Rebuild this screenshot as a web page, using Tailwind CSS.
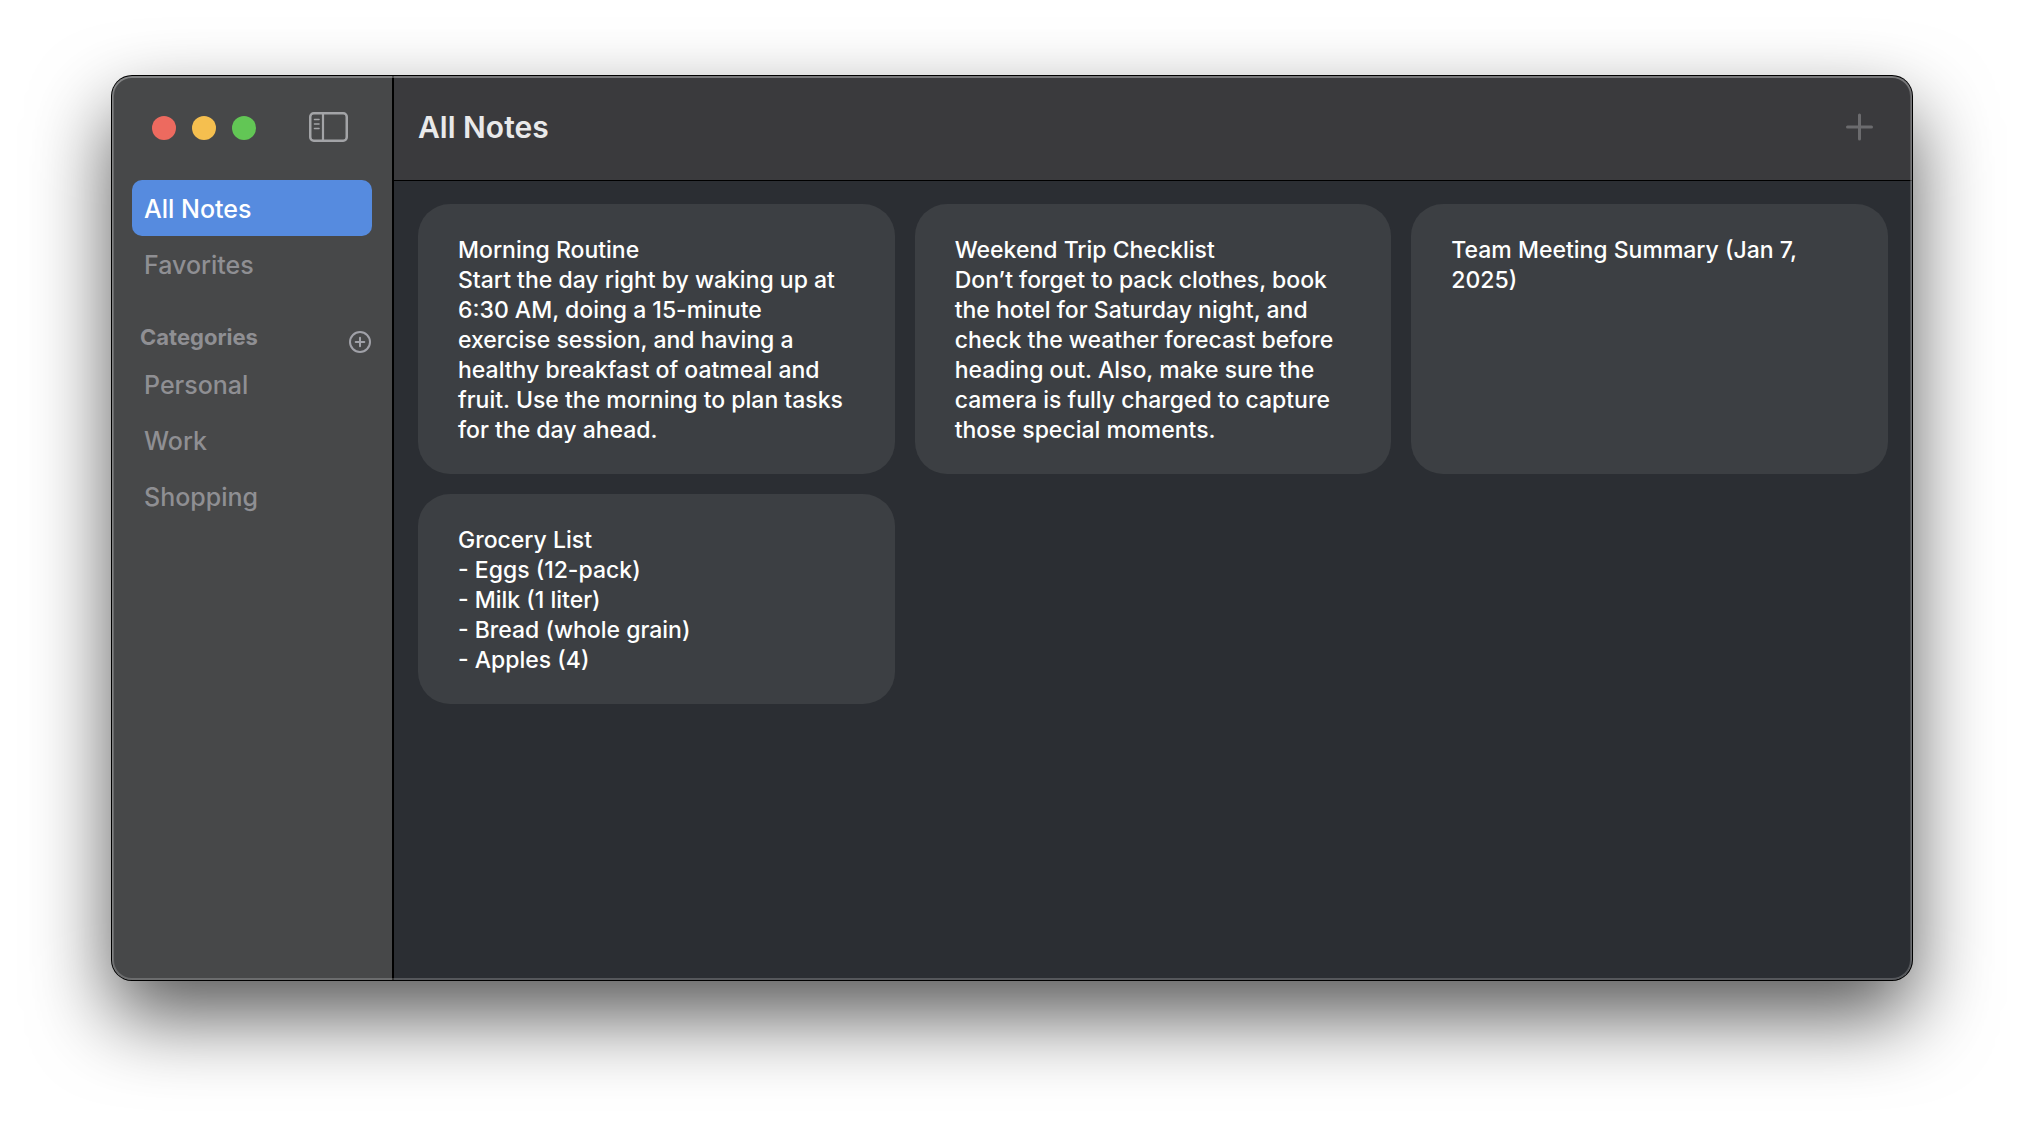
<!DOCTYPE html>
<html lang="en">
<head>
<meta charset="utf-8">
<meta name="viewport" content="width=device-width, initial-scale=1">
<title>All Notes</title>
<script src="https://cdn.jsdelivr.net/npm/@tailwindcss/browser@4"></script>
</head>
<body class="flex min-h-screen bg-white px-28 pt-19 pb-37 font-['Inter',sans-serif]">
  <div class="relative flex min-w-0 flex-1 overflow-hidden rounded-[20px] bg-[#2b2e33] shadow-[0_0_0_1px_#000,0_36px_80px_rgba(0,0,0,0.66)] after:pointer-events-none after:absolute after:inset-0 after:rounded-[20px] after:shadow-[inset_0_0_0_2px_rgba(255,255,255,0.2),inset_0_1px_0_1px_rgba(255,255,255,0.15)]">
    <aside class="flex w-[282px] shrink-0 flex-col border-r-2 border-black bg-[#474849] px-5">
      <div class="flex h-26 items-center justify-between pr-6 pl-5">
        <div class="flex gap-4">
          <button type="button" aria-label="Close" class="size-6 rounded-full bg-[#ed6a5f]"></button>
          <button type="button" aria-label="Minimize" class="size-6 rounded-full bg-[#f5bf4f]"></button>
          <button type="button" aria-label="Zoom" class="size-6 rounded-full bg-[#62c655]"></button>
        </div>
        <button type="button" aria-label="Toggle sidebar" class="pb-0.5 text-[#a3a4a7]">
          <svg class="block" width="39" height="30" viewBox="0 0 39 30" fill="none" stroke="currentColor">
            <rect x="1.25" y="1.25" width="36.5" height="27.5" rx="3.5" stroke-width="2.5"/>
            <path d="M14 1.5v27" stroke-width="2.2"/>
            <path d="M5.5 7.5h4.500M5.500 12h4.500M5.500 16.500h4.500" stroke-width="1.600" stroke-linecap="round"/>
          </svg>
        </button>
      </div>
      <nav class="text-[25px]/8 font-medium text-[#8f8f93]">
        <a href="#all" aria-current="page" class="block rounded-[10px] bg-[#568bdf] px-3 pt-[13px] pb-[11px] text-white">All Notes</a>
        <a href="#favorites" class="block px-3 pt-[13px] pb-[11px]">Favorites</a>
        <div class="flex h-16 items-end justify-between pb-[2px] pl-2">
          <h2 class="pb-[3px] text-[22px]/7 font-bold">Categories</h2>
          <button type="button" aria-label="Add category" class="mr-px text-[#a0a1a8]">
            <svg class="block" width="22" height="24" viewBox="0 0 22 24" fill="none" stroke="currentColor" stroke-width="2" stroke-linecap="round">
              <circle cx="11" cy="12" r="10"/>
              <path d="M6.700 12h8.600M11 7.700v8.600"/>
            </svg>
          </button>
        </div>
        <a href="#personal" class="block px-3 pt-[13px] pb-[11px]">Personal</a>
        <a href="#work" class="block px-3 pt-[13px] pb-[11px]">Work</a>
        <a href="#shopping" class="block px-3 pt-[13px] pb-[11px]">Shopping</a>
      </nav>
    </aside>
    <main class="flex min-w-0 flex-1 flex-col">
      <header class="flex h-[105px] items-center justify-between border-b border-black bg-[#3a3a3d] pr-9 pb-[3px] pl-6">
        <h1 class="text-[30px]/9 font-semibold text-[#e9e9ea]">All Notes</h1>
        <button type="button" aria-label="New note" class="text-[#6b6b6e]">
          <svg class="block" width="33" height="32" viewBox="0 0 33 32" fill="none" stroke="currentColor" stroke-width="3" stroke-linecap="round">
            <path d="M4.500 16h24M16.500 4v24"/>
          </svg>
        </button>
      </header>
      <section class="grid grid-cols-3 gap-5 px-6 pt-[23px] pb-6 text-[23px]/[30px] font-medium text-white">
        <article class="rounded-[32px] bg-[#3c3f43] px-10 pt-[31px] pb-[29px]">
          <h2>Morning Routine</h2>
          <p>Start the day right by waking up at<br>6:30 AM, doing a 15-minute<br>exercise session, and having a<br>healthy breakfast of oatmeal and<br>fruit. Use the morning to plan tasks<br>for the day ahead.</p>
        </article>
        <article class="rounded-[32px] bg-[#3c3f43] px-10 pt-[31px] pb-[29px]">
          <h2>Weekend Trip Checklist</h2>
          <p>Don’t forget to pack clothes, book<br>the hotel for Saturday night, and<br>check the weather forecast before<br>heading out. Also, make sure the<br>camera is fully charged to capture<br>those special moments.</p>
        </article>
        <article class="rounded-[32px] bg-[#3c3f43] px-10 pt-[31px] pb-[29px]">
          <h2>Team Meeting Summary (Jan 7,<br>2025)</h2>
        </article>
        <article class="rounded-[32px] bg-[#3c3f43] px-10 pt-[31px] pb-[29px]">
          <h2>Grocery List</h2>
          <ul>
            <li>- Eggs (12-pack)</li>
            <li>- Milk (1 liter)</li>
            <li>- Bread (whole grain)</li>
            <li>- Apples (4)</li>
          </ul>
        </article>
      </section>
    </main>
  </div>
</body>
</html>
